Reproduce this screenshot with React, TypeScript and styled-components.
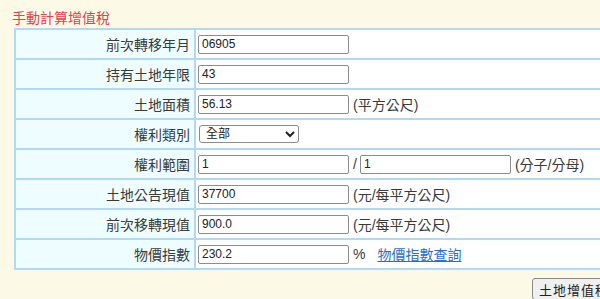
import React from "react";
import styled, { createGlobalStyle } from "styled-components";

const GlobalStyle = createGlobalStyle`
    body {
        margin: 0;
        background: #fdf9e7;
        overflow: hidden;
        font-family: "Liberation Sans", "Noto Sans CJK TC", sans-serif;
    }
`;

const Page = styled.div`
    width: 632px;
    padding: 8px 0 0 12px;
`;

const Title = styled.div`
    color: #e0434d;
    font-size: 14px;
    line-height: 20px;
    height: 20px;
`;

const Form = styled.div`
    margin-left: 2px;
    display: grid;
    grid-template-columns: 178px 1fr;
    grid-auto-rows: 28px;
    gap: 2px;
    padding: 2px;
    background: #b3d8f3;
`;

const Label = styled.div`
    background: #eefdff;
    color: #3a3a3a;
    font-size: 14px;
    display: flex;
    align-items: center;
    justify-content: flex-end;
    padding-right: 4px;
`;

const Field = styled.div`
    background: #fff;
    color: #3a3a3a;
    font-size: 14px;
    display: flex;
    align-items: center;
    padding-left: 2px;
`;

const Input = styled.input`
    box-sizing: border-box;
    width: 151px;
    height: 19px;
    padding: 1px 3px;
    border: 1px solid #8c8c8c;
    border-radius: 2px;
    font-family: "Liberation Sans", sans-serif;
    font-size: 12px;
    color: #222;
    background: #fff;
`;

const Select = styled.select`
    box-sizing: border-box;
    width: 100px;
    height: 18px;
    margin-left: 1px;
    padding: 0 2px;
    border: 1px solid #8c8c8c;
    border-radius: 3px;
    font-family: "Liberation Sans", "Noto Sans CJK TC", sans-serif;
    font-size: 12px;
    color: #222;
    background: #fff;
`;

const Unit = styled.span<{ $gap?: number }>`
    display: flex;
    margin-left: ${(p) => p.$gap ?? 4}px;
    white-space: nowrap;
`;

const Link = styled.a`
    margin-left: 12px;
    color: #2a6fc4;
    text-decoration: underline;
    white-space: nowrap;
`;

const Actions = styled.div`
    display: flex;
    justify-content: flex-end;
    margin-top: 8px;
`;

const Button = styled.button`
    height: 22px;
    padding: 0 6px;
    border: 1px solid #8a8a8a;
    border-radius: 3px;
    background: #f0f0f0;
    color: #222;
    font-family: "Liberation Sans", "Noto Sans CJK TC", sans-serif;
    font-size: 13px;
    letter-spacing: 1px;
`;

export default function App() {
    return (
        <Page>
            <GlobalStyle />
            <Title>手動計算增值稅</Title>
            <Form>
                <Label>前次轉移年月</Label>
                <Field>
                    <Input defaultValue="06905" />
                </Field>

                <Label>持有土地年限</Label>
                <Field>
                    <Input defaultValue="43" />
                </Field>

                <Label>土地面積</Label>
                <Field>
                    <Input defaultValue="56.13" />
                    <Unit>(平方公尺)</Unit>
                </Field>

                <Label>權利類別</Label>
                <Field>
                    <Select defaultValue="all">
                        <option value="all">全部</option>
                    </Select>
                </Field>

                <Label>權利範圍</Label>
                <Field>
                    <Input defaultValue="1" />
                    <Unit $gap={4}>/</Unit>
                    <Unit $gap={3}>
                        <Input defaultValue="1" />
                    </Unit>
                    <Unit>(分子/分母)</Unit>
                </Field>

                <Label>土地公告現值</Label>
                <Field>
                    <Input defaultValue="37700" />
                    <Unit>(元/每平方公尺)</Unit>
                </Field>

                <Label>前次移轉現值</Label>
                <Field>
                    <Input defaultValue="900.0" />
                    <Unit>(元/每平方公尺)</Unit>
                </Field>

                <Label>物價指數</Label>
                <Field>
                    <Input defaultValue="230.2" />
                    <Unit>%</Unit>
                    <Link href="#">物價指數查詢</Link>
                </Field>
            </Form>
            <Actions>
                <Button>土地增值稅試算</Button>
            </Actions>
        </Page>
    );
}
